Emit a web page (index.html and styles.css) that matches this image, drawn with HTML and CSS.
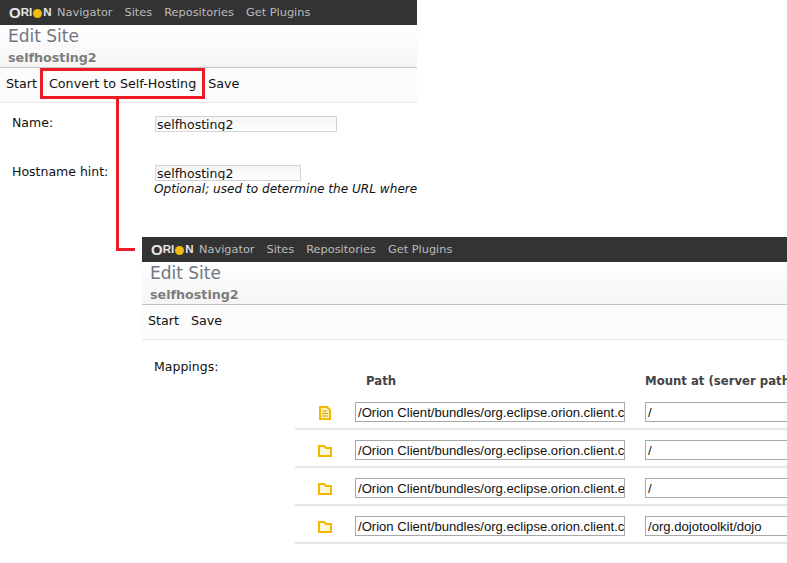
FILE: index.html
```html
<!DOCTYPE html>
<html lang="en">
<head>
	<meta charset="UTF-8">
	<title>Edit Site</title>
	<link rel="stylesheet" href="styles.css">
</head>
<body>
	<!-- first screenshot -->
	<div class="shot shot_one">
		<div class="nav">
			<span class="logo">O<small>RI</small><i></i><small>N</small></span>
			<a>Navigator</a><a>Sites</a><a>Repositories</a><a>Get Plugins</a>
		</div>
		<div class="head">
			<h1>Edit Site</h1>
			<h2>selfhosting2</h2>
		</div>
		<div class="tools tools_one">
			<span>Start</span><span>Convert to Self-Hosting</span><span>Save</span>
		</div>
		<div class="field field_name">
			<label>Name:</label>
			<input class="text text_name" type="text" value="selfhosting2">
		</div>
		<div class="field field_host">
			<label>Hostname hint:</label>
			<div class="host_box">
				<input class="text text_host" type="text" value="selfhosting2">
				<em>Optional; used to determine the URL where</em>
			</div>
		</div>
	</div>

	<!-- second screenshot -->
	<div class="shot shot_two">
		<div class="nav">
			<span class="logo">O<small>RI</small><i></i><small>N</small></span>
			<a>Navigator</a><a>Sites</a><a>Repositories</a><a>Get Plugins</a>
		</div>
		<div class="head">
			<h1>Edit Site</h1>
			<h2>selfhosting2</h2>
		</div>
		<div class="tools tools_two">
			<span>Start</span><span>Save</span>
		</div>
		<div class="mappings">
			<label>Mappings:</label>
			<div class="map_head">
				<b>Path</b><b>Mount at (server path</b>
			</div>
			<div class="map_row">
				<svg class="ico ico_doc" width="12" height="14" viewBox="0 0 12 14"><path d="M1 1H8L11 4V13H1Z" fill="#fff3b8" stroke="#f3b700" stroke-width="2"/><path d="M3 5H8M3 7.5H9M3 10H9" stroke="#c99a10" stroke-width="1"/></svg>
				<input class="path" type="text" value="/Orion Client/bundles/org.eclipse.orion.client.core/web">
				<input class="path" type="text" value="/">
			</div>
			<div class="map_row">
				<svg class="ico ico_folder" width="14" height="12" viewBox="0 0 14 12"><path d="M1 1H6L8 3H13V11H1Z" fill="#fff8d8" stroke="#f3b700" stroke-width="2"/></svg>
				<input class="path" type="text" value="/Orion Client/bundles/org.eclipse.orion.client.core/web">
				<input class="path" type="text" value="/">
			</div>
			<div class="map_row">
				<svg class="ico ico_folder" width="14" height="12" viewBox="0 0 14 12"><path d="M1 1H6L8 3H13V11H1Z" fill="#fff8d8" stroke="#f3b700" stroke-width="2"/></svg>
				<input class="path" type="text" value="/Orion Client/bundles/org.eclipse.orion.client.editor/web">
				<input class="path" type="text" value="/">
			</div>
			<div class="map_row">
				<svg class="ico ico_folder" width="14" height="12" viewBox="0 0 14 12"><path d="M1 1H6L8 3H13V11H1Z" fill="#fff8d8" stroke="#f3b700" stroke-width="2"/></svg>
				<input class="path" type="text" value="/Orion Client/bundles/org.eclipse.orion.client.core/web">
				<input class="path" type="text" value="/org.dojotoolkit/dojo">
			</div>
		</div>
	</div>

	<!-- red callout drawn over both shots -->
	<div class="callout_box"></div>
	<div class="callout_down"></div>
	<div class="callout_across"></div>
</body>
</html>
```

FILE: styles.css
```css
*{
	margin: 0;
	padding: 0;
	box-sizing: border-box;
}
body{
	width: 787px;
	height: 563px;
	background: #fff;
	overflow: hidden;
	position: relative;
	font-family: "DejaVu Sans", sans-serif;
	font-size: 12px;
	color: #111;
}
.shot{
	position: absolute;
	overflow: hidden;
	background: #fff;
}
.shot_one{
	left: 0;
	top: 0;
	width: 417px;
	height: 237px;
}
.shot_two{
	left: 142px;
	top: 237px;
	width: 645px;
	height: 326px;
}
.nav{
	height: 25px;
	background: #333;
	color: #bbb;
	display: flex;
	align-items: center;
	padding: 0 0 1px 8px;
	font-size: 11.35px;
}
.nav a{
	margin-right: 12px;
}
.logo{
	flex: none;
	width: 49px;
	padding-left: 1px;
	font-family: "Liberation Sans", sans-serif;
	font-weight: bold;
	font-size: 15px;
	color: #e6e6e6;
	display: flex;
	align-items: center;
	line-height: 1;
}
.logo small{
	font-size: 11.5px;
	margin-top: 2px;
}
.logo i{
	width: 9px;
	height: 9px;
	border-radius: 50%;
	background: #f2b90f;
	margin: 2px 1px 0 1px;
}
.head{
	height: 43px;
	padding: 1px 0 0 8px;
	border-bottom: 1px solid #c4c4c4;
	background: linear-gradient(#fff, #f5f5f5);
}
h1{
	font-size: 17px;
	font-weight: normal;
	color: #6e7681;
	line-height: 20px;
}
h2{
	font-size: 12.7px;
	font-weight: bold;
	color: #7d7d7d;
	line-height: 16px;
	margin-top: 4px;
}
.tools{
	height: 35px;
	display: flex;
	align-items: center;
	padding: 0 0 4px 6px;
	border-bottom: 1px solid #e8e8e8;
	font-size: 12.7px;
	background: #fcfcfc;
}
.tools_one span:nth-child(2){
	margin: 0 12px;
}
.tools_two span:nth-child(2){
	margin-left: 12px;
}
.field{
	display: flex;
	padding-left: 12px;
}
.field label{
	flex: none;
	width: 143px;
	font-size: 12.5px;
	white-space: nowrap;
}
.field_name{
	padding-top: 12px;
}
.field_host{
	padding-top: 32px;
}
.text{
	display: block;
	height: 16px;
	border: 1px solid #d4d4d4;
	padding-left: 1px;
	font-family: "DejaVu Sans", sans-serif;
	font-size: 12.5px;
	line-height: 14px;
	color: #111;
	background: linear-gradient(#f4f4f4, #fff);
	margin-top: 1px;
}
.text_name{
	width: 182px;
}
.text_host{
	width: 146px;
}
.host_box{
	white-space: nowrap;
}
.host_box em{
	display: block;
	font-size: 12.1px;
	margin: 1px 0 0 -1px;
}
.mappings{
	position: relative;
	padding: 19px 0 0 12px;
}
.mappings label{
	display: block;
	font-size: 12.5px;
	line-height: 15px;
}
.map_head{
	display: flex;
	margin-left: 212px;
	font-size: 11.7px;
	color: #444;
	white-space: nowrap;
	height: 18px;
}
.map_head b{
	flex: none;
}
.map_head b:first-child{
	width: 279px;
}
.map_row{
	display: flex;
	align-items: center;
	height: 38px;
	margin-left: 141px;
	width: 600px;
	padding: 4px 0 0 60px;
	border-bottom: 2px solid #e6e6e6;
	position: relative;
}
.ico{
	position: absolute;
}
.ico_doc{
	left: 24px;
	top: 14px;
}
.ico_folder{
	left: 23px;
	top: 15px;
}
.path{
	width: 270px;
	height: 20px;
	margin-right: 20px;
	flex: none;
	border: 1px solid #a8a8a8;
	padding: 0 0 0 2px;
	font-family: "Liberation Sans", sans-serif;
	font-size: 13.1px;
	color: #111;
}
.callout_box{
	position: absolute;
	left: 40px;
	top: 68px;
	width: 165px;
	height: 31px;
	border: 3px solid #ed1c24;
}
.callout_down{
	position: absolute;
	left: 116px;
	top: 99px;
	width: 3px;
	height: 152px;
	background: #ed1c24;
}
.callout_across{
	position: absolute;
	left: 116px;
	top: 248px;
	width: 19px;
	height: 3px;
	background: #ed1c24;
}
```
